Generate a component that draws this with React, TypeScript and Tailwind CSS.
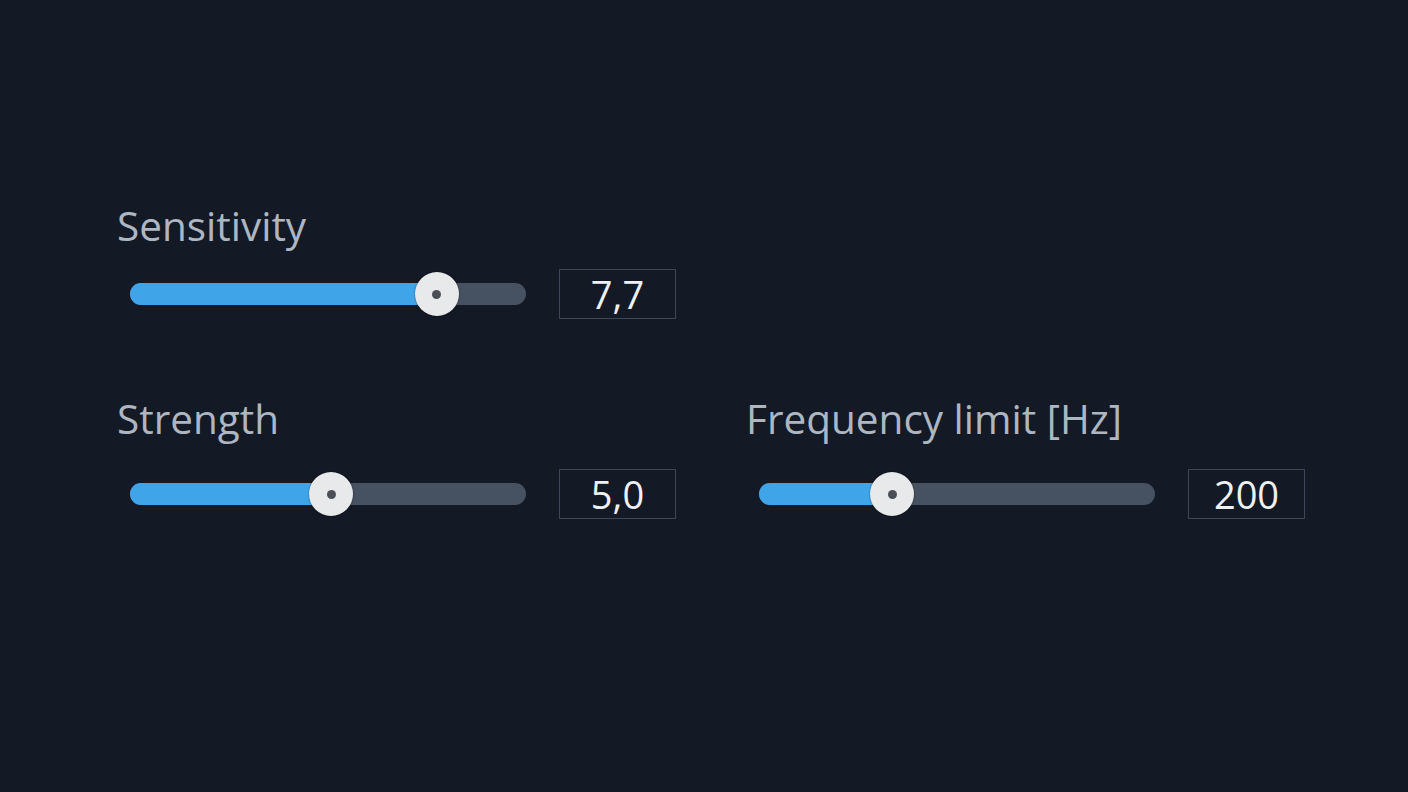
import React from 'react';

type SliderProps = {
  label: string;
  value: string;
  pct: number;
  gap?: string;
};

function Slider({ label, value, pct, gap = 'mt-[19px]' }: SliderProps) {
  return (
    <div className="flex flex-col">
      <div className="text-[40.5px] leading-[48px] text-[#aeb6c2]">{label}</div>
      <div className={`${gap} flex h-[50px] items-center`}>
        <div className="relative ml-[13px] h-[22px] w-[396px] rounded-full bg-[#465161]">
          <div className="h-full rounded-full bg-[#3fa5e8]" style={{ width: `${pct}%` }} />
          <div
            className="absolute top-1/2 flex h-[44px] w-[44px] -translate-x-1/2 -translate-y-1/2 items-center justify-center rounded-full bg-[#e8e9eb] shadow-[0_0_2px_rgba(0,0,0,0.5)]"
            style={{ left: `${pct}%` }}
          >
            <div className="h-[9px] w-[9px] rounded-full bg-[#4a4f57]" />
          </div>
        </div>
        <div className="ml-[33px] flex h-[50px] w-[117px] items-center justify-center border border-[#3c4656] text-[38px] text-[#eef0f3]">
          {value}
        </div>
      </div>
    </div>
  );
}

export default function App() {
  return (
    <div
      className="h-[792px] w-full bg-[#131a26] pl-[117px] pt-[202px]"
      style={{ fontFamily: '"Open Sans", "Noto Sans", sans-serif' }}
    >
      <div className="grid grid-cols-[559px_559px] gap-x-[70px] gap-y-[76px]">
        <Slider label="Sensitivity" value="7,7" pct={77.5} />
        <div />
        <Slider label="Strength" value="5,0" pct={50.8} gap="mt-[26px]" />
        <Slider label="Frequency limit [Hz]" value="200" pct={33.6} gap="mt-[26px]" />
      </div>
    </div>
  );
}
